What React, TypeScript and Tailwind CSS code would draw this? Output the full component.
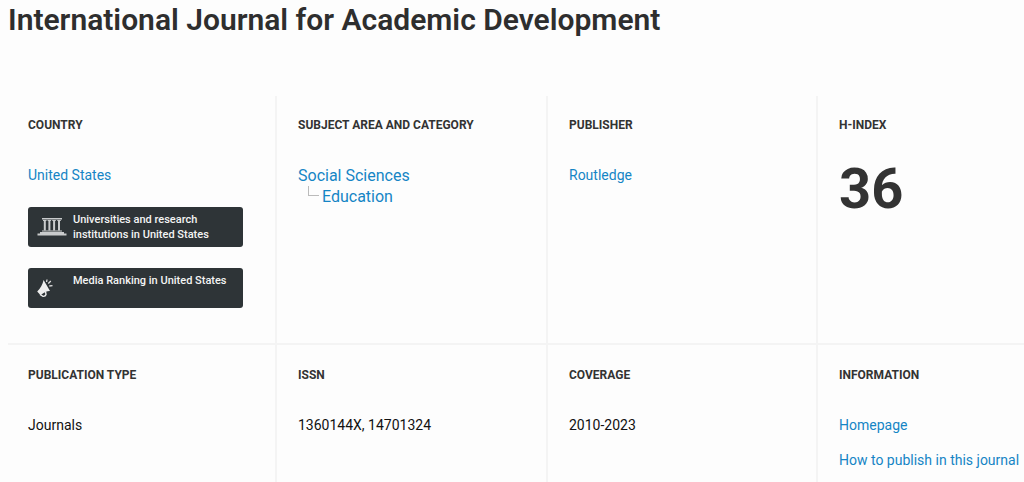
import React from 'react';

function Cell({
  title,
  className = '',
  children
}: {
  title: string;
  className?: string;
  children: React.ReactNode;
}) {
  return (
    <section className={`border-[#f4f4f4] ${className}`}>
      <h2 className="mb-8 text-[12px] leading-4 font-bold uppercase text-[#333]">
        {title}
      </h2>
      {children}
    </section>);
}

function ColumnsIcon() {
  return (
    <svg width="31" height="20" viewBox="0 0 31 20" fill="#c9cbcc" aria-hidden="true">
      <path d="M6 1h20v1.500H6z" />
      <path d="M7 3h3.500v1H7zM11.600 3h3.500v1h-3.500zM16.300 3h3.500v1h-3.500zM21.300 3h3.500v1h-3.500z" />
      <path d="M7.800 3h2v10.500h-2zM12.400 3h2v10.500h-2zM17.100 3h2v10.500h-2zM22 3h2v10.500h-2z" />
      <path d="M6 13.500h20v1H6zM4 15h24v1.500H4zM1.500 16.500h29v2h-29z" />
    </svg>);
}

function MegaphoneIcon() {
  return (
    <svg width="18" height="20" viewBox="0 0 18 20" aria-hidden="true">
      <path d="M7.600 2L14 13C11.500 12.800 8.500 14 4.600 17.300L1.200 13.400C4.500 10.400 6.600 6.200 7.600 2Z" fill="#eee" />
      <path d="M4 16.500L7 18.400Q9.500 18.600 10 16.500L9.600 14" fill="none" stroke="#eee" strokeWidth="1.400" />
      <path d="M10.600 4L11 1.500M12.300 5.500L14.800 3M13.300 8L16.500 7.600" stroke="#ddd" strokeWidth="1.300" fill="none" />
    </svg>);
}

const banner =
'flex h-10 w-[215px] rounded-[3px] bg-[#2e3437] text-[11px] leading-[15px] font-medium text-[#f4f4f4]';
const link = 'text-[#1585c5]';

export default function App() {
  return (
    <main className="flex min-h-screen flex-col bg-[#fdfdfd] pl-2 font-['Roboto',sans-serif] text-[14px] leading-5 text-[#111]">
      <h1 className="pt-0.5 mb-[58px] text-[30px] leading-9 font-semibold text-[#2e2e2e]">
        International Journal for Academic Development
      </h1>
      <div className="grid flex-1 grid-cols-[267fr_271fr_270fr_208fr] grid-rows-[249px_1fr]">
        <Cell title="Country" className="pt-[21px] pl-5 border-b-2">
          <a href="#country" className={link}>United States</a>
          <a href="#universities" className={`${banner} mt-[22px]`}>
            <span className="w-[45px] shrink-0 pl-2 pt-2.5"><ColumnsIcon /></span>
            <span className="pt-[5px]">
              Universities and research institutions in United States
            </span>
          </a>
          <a href="#media" className={`${banner} mt-[21px]`}>
            <span className="w-[45px] shrink-0 pl-2 pt-2.5"><MegaphoneIcon /></span>
            <span className="pt-[5px]">Media Ranking in United States</span>
          </a>
        </Cell>
        <Cell title="Subject Area and Category" className="pt-[21px] pl-[21px] border-l-2 border-b-2">
          <ul className="text-[16px] leading-[21px]">
            <li>
              <a href="#social-sciences" className={link}>Social Sciences</a>
              <ul>
                <li className="flex pl-2.5">
                  <span className="mr-[3px] h-2.5 w-[11px] border-b border-l border-[#bbb]" />
                  <a href="#education" className={link}>Education</a>
                </li>
              </ul>
            </li>
          </ul>
        </Cell>
        <Cell title="Publisher" className="pt-[21px] pl-[21px] border-l-2 border-b-2">
          <a href="#publisher" className={link}>Routledge</a>
        </Cell>
        <Cell title="H-Index" className="pt-[21px] pl-[21px] border-l-2 border-b-2">
          <p className="text-[56px] leading-[48px] font-bold text-[#333]">36</p>
        </Cell>
        <Cell title="Publication type" className="pt-[22px] pl-5">
          <p>Journals</p>
        </Cell>
        <Cell title="ISSN" className="pt-[22px] pl-[21px] border-l-2">
          <p>1360144X, 14701324</p>
        </Cell>
        <Cell title="Coverage" className="pt-[22px] pl-[21px] border-l-2">
          <p>2010-2023</p>
        </Cell>
        <Cell title="Information" className="pt-[22px] pl-[21px] border-l-2">
          <ul className="space-y-[15px]">
            <li><a href="#homepage" className={link}>Homepage</a></li>
            <li><a href="#publish" className={link}>How to publish in this journal</a></li>
          </ul>
        </Cell>
      </div>
    </main>);
}
